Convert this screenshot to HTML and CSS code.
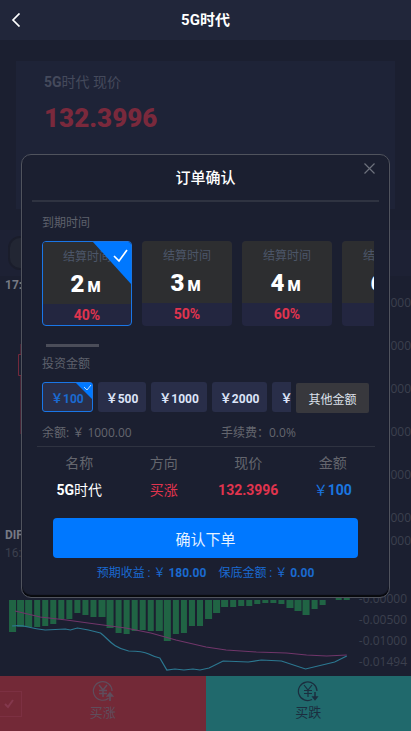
FILE: index.html
```html
<!DOCTYPE html>
<html lang="zh-CN">
<head>
    <meta charset="UTF-8">
    <meta name="viewport" content="width=device-width, initial-scale=1.0">
    <title>5G时代</title>
    <link rel="stylesheet" href="styles.css">
</head>
<body>
    <div class="page">
        <header class="header">
            <button class="back-btn" aria-label="返回">
                <svg width="10" height="14" viewBox="0 0 10 14"><path d="M8.500 .5L2 7l6.500 6.500" fill="none" stroke="#fff" stroke-width="1.700"/></svg>
            </button>
            <h1>5G时代</h1>
        </header>

        <main class="main">
            <section class="price-card">
                <div class="price-name"><b>5G</b>时代 现价</div>
                <div class="price-value">132.3996</div>
            </section>

            <div class="toolbar"><span class="pill"></span></div>

            <section class="kline">
                <div class="kline-plot">
                    <div class="kline-time">17:</div>
                    <svg class="candle" width="6" height="90" viewBox="0 0 6 90"><path d="M3 0v10M3 32v58M.5 10.500h5v21h-5z" fill="none" stroke="#73293c"/></svg>
                </div>
                <div class="axis axis-main">
                    <span>000</span>
                    <span>000</span>
                    <span>000</span>
                    <span>000</span>
                    <span>000</span>
                    <span>000</span>
                </div>
            </section>

            <section class="macd">
                <div class="macd-plot">
                    <div class="macd-name">DIF</div>
                    <div class="macd-time">16:</div>
                    <svg class="macd-chart" viewBox="0 0 357 79" preserveAspectRatio="none">
                        <path fill="#206444" d="M9 3h7v32h-7zM17 3h7v27h-7zM25 3h7v27h-7zM34 3h6v27h-6zM42 3h6v26h-6zM50 3h6v24h-6zM58 3h6v19h-6zM66 3h6v19h-6zM74 3h6v13h-6zM82 3h6v15h-6zM90 3h6v17h-6zM98 3h7v17h-7zM106 3h7v28h-7zM115 3h6v33h-6zM123 3h6v34h-6zM131 3h6v31h-6zM139 3h6v30h-6zM147 3h6v31h-6zM155 3h7v31h-7zM163 3h7v41h-7zM172 3h6v34h-6zM180 3h6v33h-6zM188 3h6v26h-6zM196 3h6v26h-6zM204 3h7v19h-7zM212 3h7v13h-7zM220 3h7v7h-7zM229 3h6v7h-6zM237 3h6v6h-6zM245 3h6v6h-6zM253 3h6v4h-6zM261 3h6v3h-6zM269 3h6v3h-6zM277 3h6v4h-6zM285 3h7v8h-7zM293 3h7v11h-7zM301 3h7v15h-7zM310 3h6v9h-6zM318 3h6v5h-6zM334 1h6v2h-6zM342 1h6v2h-6z"/>
                        <path fill="none" stroke="#71366a" d="M15 14L40 20L66 23L95 27L125 31L150 36L175 43L205 50L225 53L255 55L285 56L305 58L325 59L345 58"/>
                        <path fill="none" stroke="#2c7891" stroke-width="1.200" d="M12 29Q20 28 28 30T45 33L65 32L70 33L77 31L88 33L100 36C108 42 112 51 128 54Q142 54 148 57T159 61L166 73L174 72L183 73L192 72L199 73L208 71L222 64L247 65L260 63L280 64L304 72L333 65L345 59"/>
                    </svg>
                </div>
                <div class="axis axis-macd">
                    <span>000</span>
                    <span>-0.00000</span>
                    <span>-0.00500</span>
                    <span>-0.01000</span>
                    <span>-0.01494</span>
                </div>
            </section>
        </main>

        <footer class="footer">
            <button class="trade-btn up-btn">
                <svg width="22" height="22" viewBox="0 0 22 22" fill="none" stroke="currentColor" stroke-width="1.200"><path d="M16.500 18.200A9.300 9.300 0 1 1 20 11"/><path d="M7 5l4 5 4-5M11 10v7M7 10.500h8M7 13.500h8" stroke-width="1.500"/><path d="M18 21v-7M15.500 16L18 13l2.500 3z" stroke-width="1.700"/></svg>
                买涨
            </button>
            <button class="trade-btn down-btn">
                <svg width="22" height="22" viewBox="0 0 22 22" fill="none" stroke="currentColor" stroke-width="1.200"><path d="M15 19.500A9.300 9.300 0 1 1 20 11"/><path d="M7 5l4 5 4-5M11 10v7M7 10.500h8M7 13.500h8"/><path d="M18 12v7M16 17L18 19.500l2-2.500z" stroke-width="1.500"/></svg>
                买跌
            </button>
            <div class="corner-badge">
                <svg width="10" height="10" viewBox="0 0 10 10"><path d="M1 5l3 3 5-7" fill="none" stroke="#84384d" stroke-width="2"/></svg>
            </div>
        </footer>
    </div>

    <div class="overlay">
        <div class="modal" role="dialog" aria-labelledby="modalTitle">
            <button class="close-btn" aria-label="关闭">
                <svg width="11" height="11" viewBox="0 0 11 11"><path d="M.5 .5l10 10M10.500 .5l-10 10" stroke="#6d717c" fill="none" stroke-width="1.200"/></svg>
            </button>
            <h2 class="modal-title" id="modalTitle">订单确认</h2>

            <div class="modal-body">
                <div class="label">到期时间</div>
                <div class="time-list">
                    <button class="time-item active">
                        <span class="time-top">
                            <span class="time-label">结算时间</span>
                            <span class="time-value">2<small>M</small></span>
                        </span>
                        <span class="time-rate">40%</span>
                        <svg class="time-corner" width="38" height="42" viewBox="0 0 38 42"><path d="M0 0h38v42z" fill="#0078ff"/><path d="M21 14l5 5 8-11" fill="none" stroke="#fff" stroke-width="1.700"/></svg>
                    </button>
                    <button class="time-item">
                        <span class="time-top">
                            <span class="time-label">结算时间</span>
                            <span class="time-value">3<small>M</small></span>
                        </span>
                        <span class="time-rate">50%</span>
                    </button>
                    <button class="time-item">
                        <span class="time-top">
                            <span class="time-label">结算时间</span>
                            <span class="time-value">4<small>M</small></span>
                        </span>
                        <span class="time-rate">60%</span>
                    </button>
                    <button class="time-item">
                        <span class="time-top">
                            <span class="time-label">结算时间</span>
                            <span class="time-value">6<small>M</small></span>
                        </span>
                        <span class="time-rate"></span>
                    </button>
                </div>
                <div class="scrollbar"></div>

                <div class="label">投资金额</div>
                <div class="amount-row">
                    <div class="amount-list">
                        <button class="amount-item active">￥100
                            <svg class="amount-corner" width="16" height="16" viewBox="0 0 16 16"><path d="M0 0h16v16z" fill="#0078ff"/><path d="M8 4l3 3 4-5" fill="none" stroke="#b9dbff"/></svg>
                        </button>
                        <button class="amount-item">￥500</button>
                        <button class="amount-item">￥1000</button>
                        <button class="amount-item">￥2000</button>
                        <button class="amount-item">￥</button>
                    </div>
                    <button class="other-btn">其他金额</button>
                </div>

                <div class="balance">
                    <span>余额: ￥ 1000.00</span>
                    <span>手续费：0.0%</span>
                </div>
            </div>

            <table class="order">
                <thead>
                    <tr><th>名称</th><th>方向</th><th>现价</th><th>金额</th></tr>
                </thead>
                <tbody>
                    <tr>
                        <td class="name"><b>5G</b>时代</td>
                        <td class="red">买涨</td>
                        <td class="red"><b>132.3996</b></td>
                        <td class="blue">￥<b>100</b></td>
                    </tr>
                </tbody>
            </table>

            <button class="submit-btn">确认下单</button>
            <div class="profit">
                <span>预期收益 : ￥ <b>180.00</b></span>
                <span>保底金额 : ￥ <b>0.00</b></span>
            </div>
        </div>
    </div>
</body>
</html>
```

FILE: styles.css
```css
* {
    box-sizing: border-box;
}
body {
    margin: 0;
    background-color: #1b1f30;
    color: #fff;
    font-family: Roboto, 'Noto Sans CJK SC', sans-serif;
    font-size: 12px;
}
button {
    margin: 0;
    padding: 0;
    border: none;
    background: none;
    color: inherit;
    font-family: inherit;
    cursor: pointer;
}
svg {
    display: block;
}
.page {
    display: flex;
    flex-direction: column;
    min-height: 100vh;
}

/* header */
.header {
    display: grid;
    grid-template-columns: 32px 1fr 32px;
    align-items: center;
    height: 40px;
    background-color: #21263a;
}
.header h1 {
    margin: 0;
    font-size: 15px;
    line-height: 20px;
    text-align: center;
}
.back-btn {
    padding-left: 11px;
}

/* quotes behind the dialog */
.main {
    flex: 1;
    display: flex;
    flex-direction: column;
}
.price-card {
    height: 148px;
    margin: 21px 16px;
    padding: 10px 28px;
    background-color: #1e2337;
}
.price-name {
    color: #454a5c;
    font-size: 14px;
    line-height: 22px;
}
.price-value {
    margin-top: 7px;
    color: #7a293c;
    font-size: 26px;
    font-weight: 900;
    line-height: 36px;
}
.toolbar {
    height: 46px;
    padding: 6px 8px;
    background-color: #1d2134;
}
.pill {
    display: block;
    width: 60px;
    height: 34px;
    border: 2px solid #1a1d2b;
    border-radius: 12px;
    background-color: #222633;
}
.kline {
    display: flex;
    justify-content: space-between;
    height: 250px;
}
.kline-time {
    padding-left: 5px;
    color: #777a85;
    font-size: 12px;
    font-weight: bold;
    line-height: 18px;
}
.candle {
    margin: 50px 0 0 18px;
}
.axis {
    display: flex;
    flex-direction: column;
    color: #3c404e;
    font-family: 'Open Sans', sans-serif;
    font-size: 12px;
    line-height: 16px;
    text-align: right;
}
.axis-main {
    gap: 27px;
    padding-top: 19px;
}
.macd {
    display: flex;
    flex: 1;
}
.macd-plot {
    flex: 1;
    display: flex;
    flex-direction: column;
}
.macd-name,
.macd-time {
    padding-left: 5px;
    font-size: 12px;
    line-height: 18px;
}
.macd-name {
    color: #777a85;
    font-weight: bold;
}
.macd-time {
    color: #3c404e;
}
.macd-chart {
    width: 100%;
    height: 79px;
    margin-top: auto;
}
.axis-macd {
    gap: 5px;
    padding: 7px 4px 0 0;
}
.axis-macd span:first-child {
    margin: 0 -4px 37px 0;
}

/* buy buttons */
.footer {
    position: relative;
    display: flex;
    height: 55px;
}
.trade-btn {
    flex: 1;
    display: flex;
    flex-direction: column;
    align-items: center;
    padding-top: 4px;
    font-size: 13px;
    line-height: 22px;
}
.up-btn {
    background-color: #732937;
    color: #5f4d5c;
}
.down-btn {
    background-color: #20696c;
    color: #1b2e3f;
}
.corner-badge {
    position: absolute;
    top: 15px;
    left: -4px;
    display: flex;
    align-items: center;
    justify-content: center;
    width: 26px;
    height: 26px;
    border: 1px solid #7c3042;
}

/* dialog */
.overlay {
    position: fixed;
    inset: 0;
    padding: 154px 21px 0;
}
.modal {
    position: relative;
    padding: 9px 10px 14px;
    border: 1px solid #50535d;
    border-radius: 10px;
    background-color: #1b1f30;
    box-shadow: inset 0 -2px 1px #08090d;
}
.close-btn {
    position: absolute;
    top: 8px;
    right: 14px;
}
.modal-title {
    margin: 0;
    padding-bottom: 8px;
    border-bottom: 2px solid #2f3341;
    font-size: 15px;
    font-weight: 500;
    line-height: 28px;
    text-align: center;
}
.modal-body {
    padding: 12px 5px 3px 10px;
}
.label {
    color: #5e616c;
    font-size: 12px;
    line-height: 18px;
}
.time-list {
    display: flex;
    gap: 10px;
    margin-top: 9px;
    overflow: hidden;
}
.time-item {
    position: relative;
    flex: 0 0 90px;
    display: flex;
    flex-direction: column;
    height: 85px;
    border-radius: 4px;
    background-color: #232640;
    overflow: hidden;
}
.time-item.active {
    border: 1px solid #1a76e6;
}
.time-top {
    display: flex;
    flex-direction: column;
    width: 100%;
    padding-top: 6px;
    background-color: #2d2e30;
}
.time-label {
    color: #4c5669;
    font-size: 12px;
    line-height: 18px;
}
.time-value {
    display: flex;
    align-items: baseline;
    justify-content: center;
    gap: 3px;
    height: 38px;
    padding-right: 3px;
    font-size: 24px;
    font-weight: 900;
    line-height: 36px;
}
.time-value small {
    font-size: 15px;
}
.time-rate {
    width: 100%;
    color: #e0344e;
    font-size: 14px;
    font-weight: bold;
    line-height: 22px;
}
.time-corner,
.amount-corner {
    position: absolute;
    top: 0;
    right: 0;
}
.scrollbar {
    width: 53px;
    height: 3px;
    margin: 18px 0 8px 4px;
    background-color: #4b4d59;
}
.amount-row {
    display: flex;
    gap: 5px;
    margin-top: 9px;
}
.amount-list {
    display: flex;
    gap: 5px;
    width: 249px;
    overflow: hidden;
}
.amount-item {
    position: relative;
    flex: none;
    height: 30px;
    padding: 0 8px;
    border-radius: 3px;
    background-color: #292e49;
    color: #dce4f8;
    font-size: 12px;
    font-weight: bold;
}
.amount-item.active {
    border: 1px solid #1a76e6;
    color: #1a6ad0;
}
.other-btn {
    width: 73px;
    height: 30px;
    margin-top: 1px;
    border-radius: 2px;
    background-color: #38383d;
    color: #dce0ea;
    font-size: 12px;
}
.balance {
    display: grid;
    grid-template-columns: 179px 1fr;
    margin-top: 10px;
    color: #64666e;
    font-family: 'Open Sans', 'Noto Sans CJK SC', sans-serif;
    font-size: 12px;
    line-height: 20px;
}
.order {
    width: calc(100% - 9px);
    margin-left: 5px;
    border-top: 1px solid #2f3341;
    border-collapse: separate;
    border-spacing: 0;
    table-layout: fixed;
    font-size: 14px;
    line-height: 22px;
    text-align: center;
}
.order th {
    padding: 5px 0 0;
    color: #64666e;
    font-weight: normal;
}
.order td {
    padding: 5px 0 0;
}
.red {
    color: #e0344e;
}
.blue {
    color: #1a76e0;
}
.submit-btn {
    display: block;
    width: calc(100% - 42px);
    height: 40px;
    margin: 17px auto 5px 21px;
    border-radius: 4px;
    background-color: #0078ff;
    color: #e6f2ff;
    font-size: 15px;
}
.profit {
    display: flex;
    justify-content: center;
    gap: 12px;
    color: #1a6ad0;
    font-size: 12px;
    line-height: 20px;
}
```
